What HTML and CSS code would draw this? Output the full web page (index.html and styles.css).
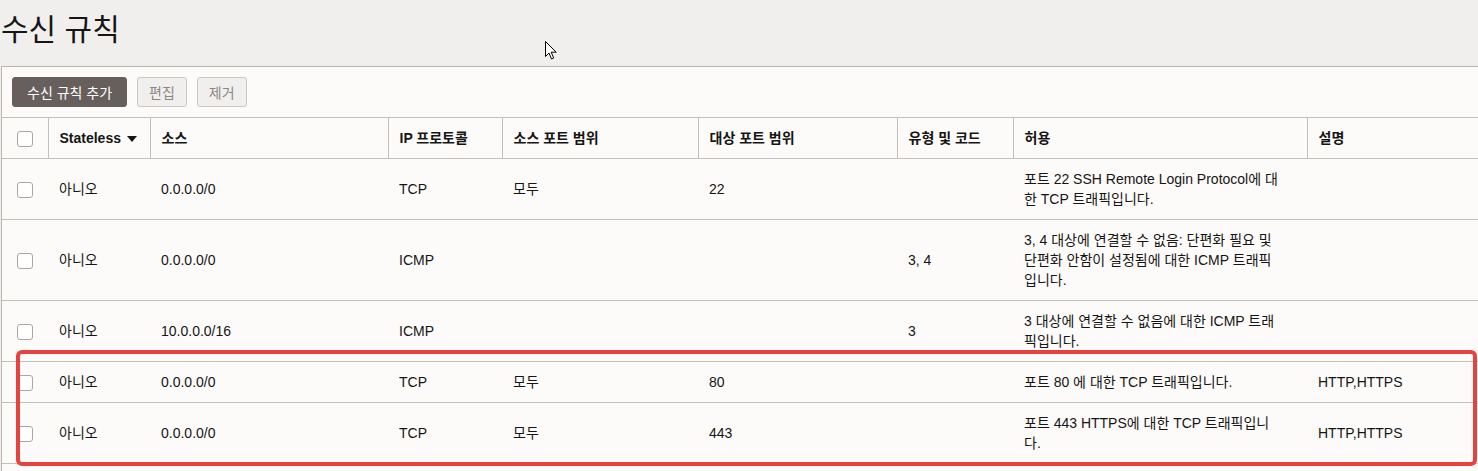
FILE: index.html
```html
<!DOCTYPE html>
<html lang="ko">
<head>
    <meta charset="UTF-8">
    <meta name="viewport" content="width=device-width, initial-scale=1.0">
    <title>수신 규칙</title>
    <link rel="stylesheet" href="styles.css">
</head>
<body>
    <h1 class="page-title">수신 규칙</h1>
    <div class="panel">
        <div class="toolbar">
            <button class="btn btn-primary">수신 규칙 추가</button>
            <button class="btn" disabled>편집</button>
            <button class="btn" disabled>제거</button>
        </div>
        <table class="rules">
            <colgroup>
                <col style="width:46px">
                <col style="width:102px">
                <col style="width:238px">
                <col style="width:114px">
                <col style="width:196px">
                <col style="width:199px">
                <col style="width:116px">
                <col style="width:294px">
                <col style="width:171px">
            </colgroup>
            <thead>
                <tr>
                    <th class="check-cell"><span class="checkbox"></span></th>
                    <th>Stateless <svg class="sort-icon" width="10" height="6" viewBox="0 0 10 6"><path d="M0 0h10L5 6z" fill="#161513"/></svg></th>
                    <th>소스</th>
                    <th>IP 프로토콜</th>
                    <th>소스 포트 범위</th>
                    <th>대상 포트 범위</th>
                    <th>유형 및 코드</th>
                    <th>허용</th>
                    <th>설명</th>
                </tr>
            </thead>
            <tbody>
                <tr>
                    <td class="check-cell"><span class="checkbox"></span></td>
                    <td>아니오</td>
                    <td>0.0.0.0/0</td>
                    <td>TCP</td>
                    <td>모두</td>
                    <td>22</td>
                    <td></td>
                    <td>포트 22 SSH Remote Login Protocol에 대<br>한 TCP 트래픽입니다.</td>
                    <td></td>
                </tr>
                <tr>
                    <td class="check-cell"><span class="checkbox"></span></td>
                    <td>아니오</td>
                    <td>0.0.0.0/0</td>
                    <td>ICMP</td>
                    <td></td>
                    <td></td>
                    <td>3, 4</td>
                    <td>3, 4 대상에 연결할 수 없음: 단편화 필요 및<br>단편화 안함이 설정됨에 대한 ICMP 트래픽<br>입니다.</td>
                    <td></td>
                </tr>
                <tr>
                    <td class="check-cell"><span class="checkbox"></span></td>
                    <td>아니오</td>
                    <td>10.0.0.0/16</td>
                    <td>ICMP</td>
                    <td></td>
                    <td></td>
                    <td>3</td>
                    <td>3 대상에 연결할 수 없음에 대한 ICMP 트래<br>픽입니다.</td>
                    <td></td>
                </tr>
                <tr>
                    <td class="check-cell"><span class="checkbox"></span></td>
                    <td>아니오</td>
                    <td>0.0.0.0/0</td>
                    <td>TCP</td>
                    <td>모두</td>
                    <td>80</td>
                    <td></td>
                    <td>포트 80 에 대한 TCP 트래픽입니다.</td>
                    <td>HTTP,HTTPS</td>
                </tr>
                <tr>
                    <td class="check-cell"><span class="checkbox"></span></td>
                    <td>아니오</td>
                    <td>0.0.0.0/0</td>
                    <td>TCP</td>
                    <td>모두</td>
                    <td>443</td>
                    <td></td>
                    <td>포트 443 HTTPS에 대한 TCP 트래픽입니<br>다.</td>
                    <td>HTTP,HTTPS</td>
                </tr>
            </tbody>
        </table>
    </div>
    <div class="highlight"></div>
    <svg class="cursor" width="12" height="19" viewBox="0 0 12 19">
        <path d="M0.5 0.5v15l3.5-3.5 2.5 6 2.2-1-2.5-5.8h5z" fill="#fff" stroke="#000" stroke-width="1" stroke-linejoin="round"/>
    </svg>
</body>
</html>
```

FILE: styles.css
```css
body {
    font-family: "Liberation Sans", "Noto Sans CJK KR", sans-serif;
    font-size: 14px;
    color: #161513;
    background-color: #f1efed;
    margin: 0;
    min-height: 471px;
    position: relative;
    overflow: hidden;
}
.page-title {
    font-size: 30px;
    font-weight: normal;
    line-height: 38px;
    margin: 0 0 17px 0;
    padding: 11px 0 0 1px;
}
.panel {
    background: #fcfbfa;
    border-top: 1px solid #bcb6b1;
    border-left: 1px solid #bcb6b1;
    margin-left: 1px;
    min-height: 420px;
}
.toolbar {
    display: flex;
    gap: 10px;
    padding: 10px 10px;
}
.btn {
    font-family: inherit;
    font-size: 14px;
    height: 30px;
    padding: 0 11px;
    border: 1px solid #cbc6c1;
    border-radius: 3px;
    background: #f1efed;
    color: #8c8681;
}
.btn-primary {
    padding: 0 14px;
    border-color: #665f5b;
    background: #665f5b;
    color: #fff;
}
.rules {
    width: 100%;
    table-layout: fixed;
    border-collapse: collapse;
}
.rules th, .rules td {
    padding: 10px 11px;
    line-height: 20px;
    text-align: left;
    vertical-align: middle;
    border-bottom: 1px solid #c4bfba;
    white-space: nowrap;
}
.rules th {
    font-weight: bold;
    border-top: 1px solid #c4bfba;
    border-left: 1px solid #c4bfba;
}
.rules th:first-child {
    border-left: none;
}
.rules .check-cell {
    text-align: center;
    padding: 10px 0;
}
.checkbox {
    display: inline-block;
    width: 14px;
    height: 14px;
    border: 1px solid #aca6a1;
    border-radius: 3px;
    background: #fff;
    vertical-align: middle;
}
.sort-icon {
    margin-left: 2px;
    vertical-align: middle;
}
.highlight {
    position: absolute;
    left: 16px;
    top: 350px;
    width: 1461px;
    height: 116px;
    box-sizing: border-box;
    border: 4px solid #e6433f;
    border-radius: 6px;
}
.cursor {
    position: absolute;
    left: 545px;
    top: 41px;
}
```
